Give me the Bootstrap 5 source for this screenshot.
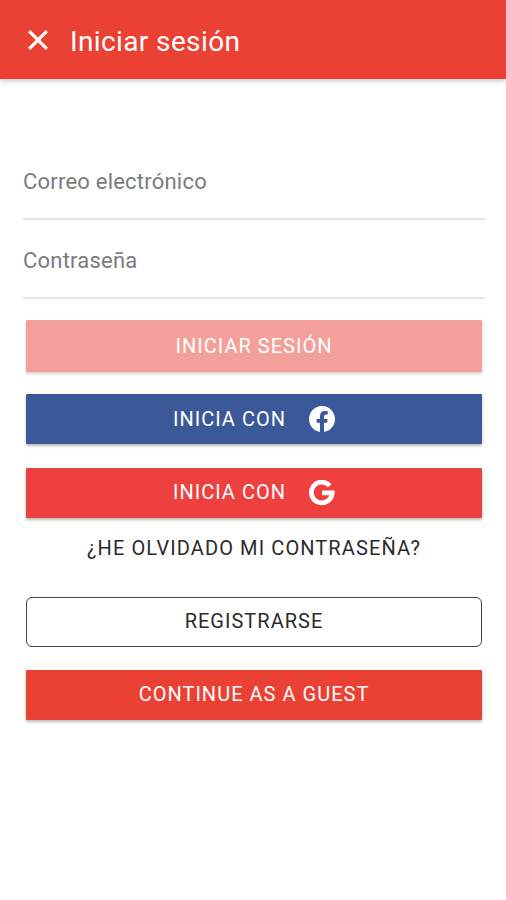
<!DOCTYPE html>
<html lang="es">
<head>
<meta charset="utf-8">
<meta name="viewport" content="width=device-width, initial-scale=1">
<title>Iniciar sesión</title>
<link href="https://cdn.jsdelivr.net/npm/bootstrap@5.3.0/dist/css/bootstrap.min.css" rel="stylesheet">
<style>
body { font-family: Roboto, "Liberation Sans", sans-serif; background: #fefefe; min-height: 900px; }
.app-bar { height: 79px; padding: 1px 0 0 28px; gap: 22px; background: #eb4034; box-shadow: 0 2px 5px rgba(0,0,0,.22); }
.app-title { font-size: 28px; line-height: 36px; letter-spacing: .38px; margin-top: 3px; }
.login-form { padding: 65px 21px 0 23px; }
.line-input, .line-input:focus { height: 79px; padding: 4px 0 0; border: 0; border-bottom: 2px solid #e5e5e5; border-radius: 0; background: transparent; box-shadow: none; font-size: 22px; letter-spacing: .22px; }
.line-input.first-field { height: 76px; padding: 0; }
.line-input::placeholder { color: #7c7c7c; opacity: 1; }
.actions { padding: 21px 3px 0; }
.act { display: flex; align-items: center; justify-content: center; height: 50px; margin-bottom: 23px; padding: 0 0 2px; border: 0; border-radius: 1px; font-size: 20px; letter-spacing: 1.02px; font-weight: 400; color: #fff; text-transform: uppercase; box-shadow: 0 2px 3px rgba(0,0,0,.27); }
.act-login, .act-login:disabled { height: 52px; margin-bottom: 22px; padding: 0; background: #f4a09a; color: #fff; opacity: 1; border: 0; box-shadow: 0 2px 3px rgba(0,0,0,.16); }
.act-facebook, .act-facebook:hover { margin-bottom: 24px; padding-bottom: 1px; background: #3b5998; color: #fff; }
.act-google, .act-google:hover { background: #ef4040; color: #fff; }
.act-guest, .act-guest:hover { background: #eb4034; color: #fff; }
.act-plain { height: 32px; margin: -9px 0 33px; padding: 0; letter-spacing: 1.1px; color: #2b2b2b; box-shadow: none; }
.act-register { border: 1.5px solid #444; border-radius: 6px; color: #2b2b2b; box-shadow: none; }
.act svg { margin-left: 23px; }
.act-google svg { margin-top: 2px; }
</style>
</head>
<body>
<header class="app-bar d-flex align-items-center text-white">
  <button type="button" class="btn p-0 border-0 text-white d-flex" aria-label="Cerrar">
    <svg width="20" height="20" viewBox="0 0 20 20" fill="none" stroke="currentColor" stroke-width="3.3"><path d="M1.2 1.2 18.8 18.8M18.8 1.2 1.2 18.8"/></svg>
  </button>
  <h1 class="app-title mb-0 fw-normal">Iniciar sesión</h1>
</header>
<main>
  <form class="login-form">
    <input type="email" class="form-control line-input first-field" placeholder="Correo electrónico">
    <input type="password" class="form-control line-input" placeholder="Contraseña">
    <div class="actions">
      <button type="submit" class="btn w-100 act act-login" disabled>Iniciar sesión</button>
      <button type="button" class="btn w-100 act act-facebook">Inicia con
        <svg width="26" height="26" viewBox="0 0 24 24" fill="currentColor"><path d="M24 12.07C24 5.4 18.63 0 12 0S0 5.4 0 12.07c0 6.03 4.39 11.03 10.13 11.93v-8.44H7.08v-3.49h3.05V9.41c0-3.02 1.79-4.69 4.53-4.69 1.31 0 2.69.24 2.69.24v2.97h-1.52c-1.49 0-1.96.93-1.96 1.89v2.25h3.33l-.53 3.49h-2.8V24C19.61 23.1 24 18.1 24 12.07z"/></svg>
      </button>
      <button type="button" class="btn w-100 act act-google">Inicia con
        <svg width="26" height="26" viewBox="0 0 26 26" fill="none" stroke="currentColor" stroke-width="4.7"><path d="M20.7 5.7A10.4 10.4 0 1 0 23.2 12.9H13"/></svg>
      </button>
      <button type="button" class="btn w-100 act act-plain">¿He olvidado mi contraseña?</button>
      <button type="button" class="btn w-100 act act-register">Registrarse</button>
      <button type="button" class="btn w-100 act act-guest mb-0">Continue as a guest</button>
    </div>
  </form>
</main>
<script src="https://cdn.jsdelivr.net/npm/bootstrap@5.3.0/dist/js/bootstrap.bundle.min.js"></script>
</body>
</html>
